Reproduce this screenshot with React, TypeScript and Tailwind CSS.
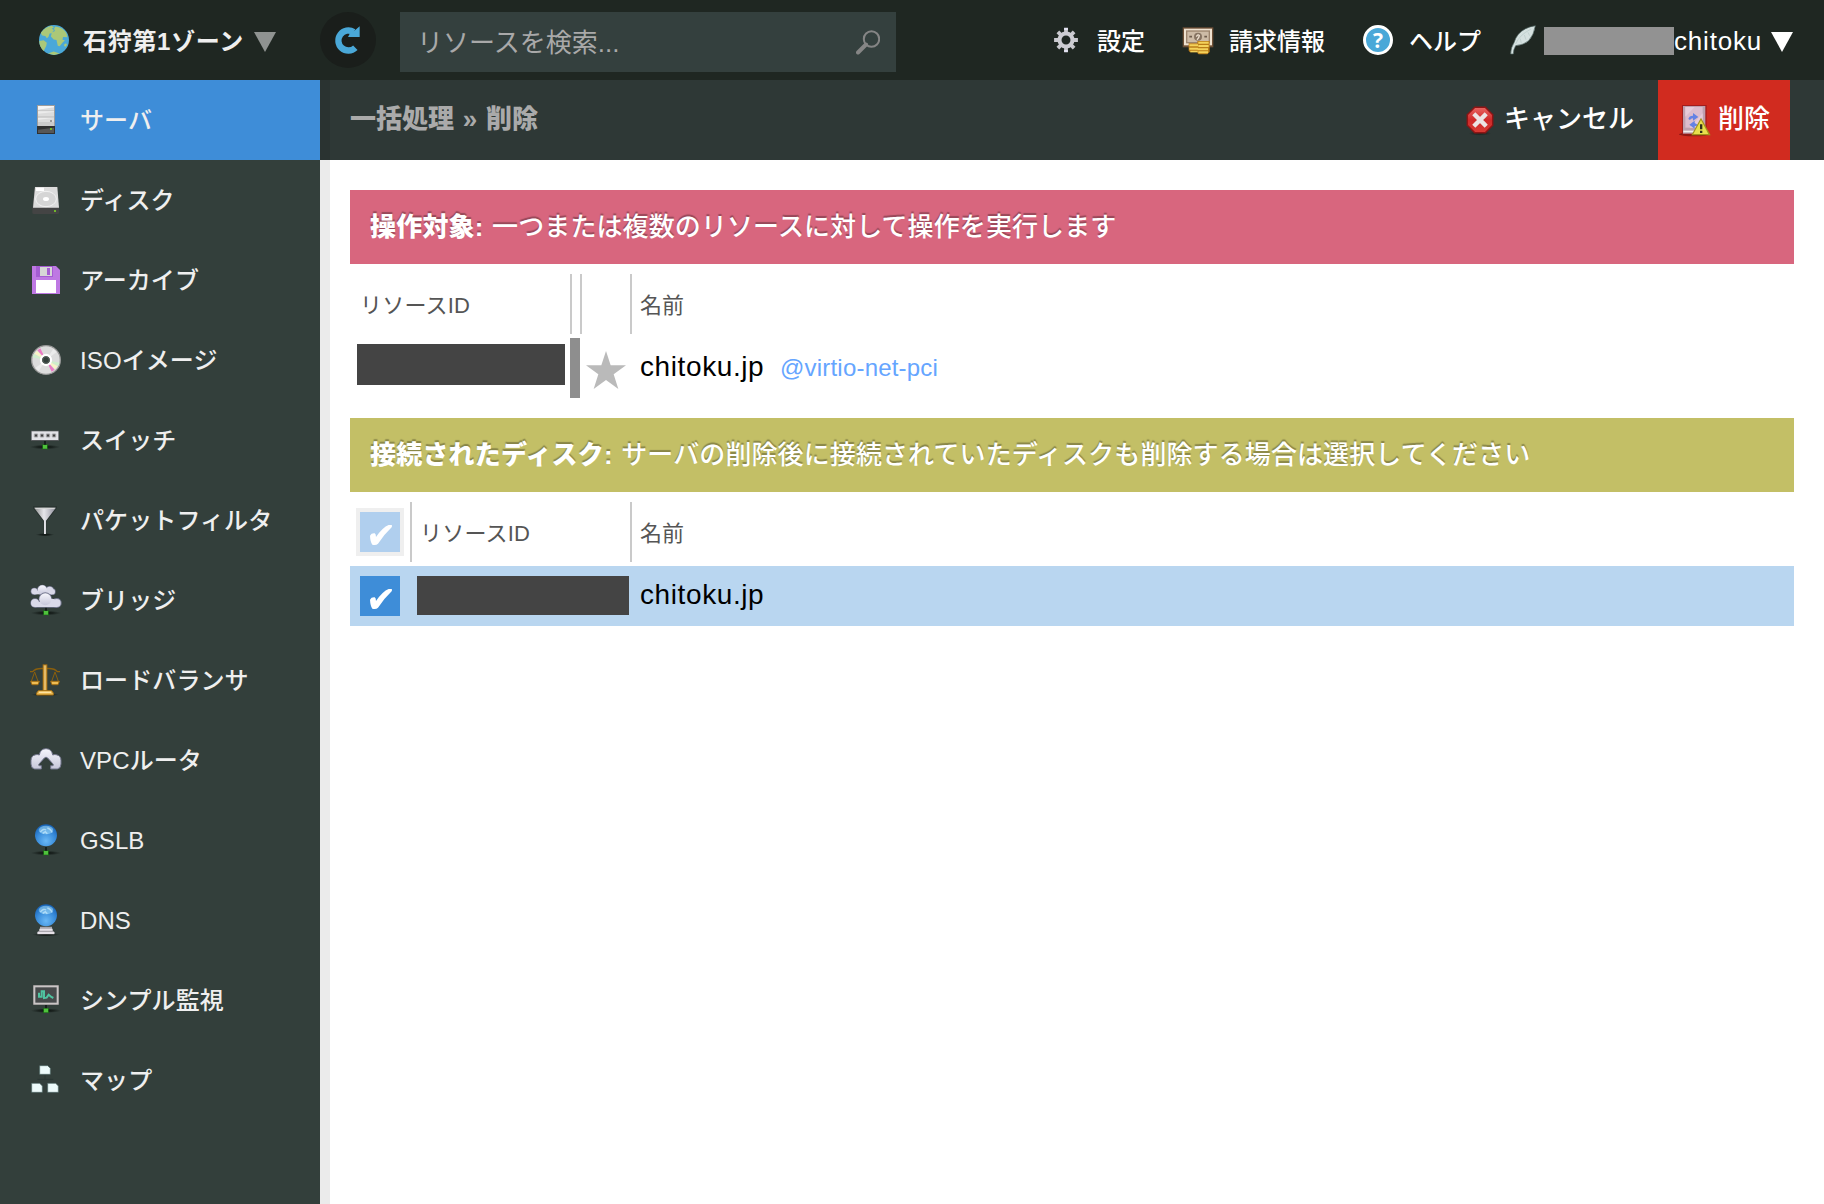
import type { ReactNode } from "react";

type IconProps = { children: ReactNode; className?: string };

function Icon({ children, className = "size-8" }: IconProps) {
  return (
    <svg viewBox="0 0 96 96" className={`block shrink-0 overflow-visible ${className}`}>
      {children}
    </svg>
  );
}

function Defs() {
  return (
    <svg className="absolute size-0">
      <defs>
        <linearGradient id="silver" x1="0" y1="0" x2="0" y2="1">
          <stop offset="0" stopColor="#f6f6fc" />
          <stop offset="1" stopColor="#c6c6da" />
        </linearGradient>
        <linearGradient id="gold" x1="0" y1="0" x2="1" y2="0">
          <stop offset="0" stopColor="#c48a28" />
          <stop offset="0.5" stopColor="#f2cf82" />
          <stop offset="1" stopColor="#c48a28" />
        </linearGradient>
        <linearGradient id="funnel" x1="0" y1="0" x2="1" y2="0">
          <stop offset="0" stopColor="#8d8d8d" />
          <stop offset="0.45" stopColor="#e6e6ea" />
          <stop offset="1" stopColor="#8f8f9b" />
        </linearGradient>
        <radialGradient id="ball" cx="0.5" cy="0.75" r="0.75">
          <stop offset="0" stopColor="#6ab8f5" />
          <stop offset="0.55" stopColor="#3a8ddb" />
          <stop offset="1" stopColor="#1560b4" />
        </radialGradient>
        <radialGradient id="shade">
          <stop offset="0" stopColor="#0c120f" />
          <stop offset="0.5" stopColor="#151c19" stopOpacity="0.8" />
          <stop offset="1" stopColor="#1b2421" stopOpacity="0" />
        </radialGradient>
        <linearGradient id="red" x1="0" y1="0" x2="0" y2="1">
          <stop offset="0" stopColor="#e8625f" />
          <stop offset="0.5" stopColor="#cf2a2a" />
          <stop offset="1" stopColor="#d83a34" />
        </linearGradient>
      </defs>
    </svg>
  );
}

function NetNode({ x = 48, y = 87 }: { x?: number; y?: number }) {
  return (
    <g>
      <ellipse cx={x} cy={y} rx="46" ry="7" fill="url(#shade)" />
      <rect x={x - 3} y={y - 18} width="6" height="12" fill="#16201b" />
      <path d={`M${x - 10} ${y - 9}l7 2h6l7-2-2 9 2 8-7-2h-6l-7 2 2-8z`} fill="#1c6a18" />
      <rect x={x - 6} y={y - 6} width="12" height="11" fill="#4fc23c" />
    </g>
  );
}

const ServerIcon = () => (
  <Icon>
    <rect x="21" y="3" width="54" height="64" fill="#9d9d9d" />
    <rect x="24" y="6" width="48" height="60" fill="#dcdcdc" />
    <path d="M24 6h48v4L24 17z" fill="#f6f6f6" />
    <path d="M24 18h48v4H24zM24 36h48v5H24zM24 54h48v12H24z" fill="#cbcbcb" />
    <path d="M24 29l48-5v-2H24zM24 47l48-5H24z" fill="#ececec" />
    <rect x="60" y="48" width="6" height="6" fill="#999" />
    <rect x="21" y="66" width="54" height="24" fill="#303030" />
    <path d="M24 77l48-6v16H24z" fill="#575757" />
    <rect x="60" y="72" width="6" height="6" fill="#6fb52c" />
  </Icon>
);

const DiskIcon = () => (
  <Icon>
    <path d="M15 8h66l6 65v13q0 4-4 4H11q-4 0-4-4V73z" fill="#444" />
    <path d="M15 9h67l5 62H9z" fill="#dcdcdc" />
    <rect x="18" y="11" width="24" height="10" fill="#fff" />
    <ellipse cx="48" cy="45" rx="31" ry="23" fill="#d5d5d5" stroke="#f2f2f2" strokeWidth="3" />
    <ellipse cx="48" cy="45" rx="9" ry="6" fill="#fff" />
    <rect x="72" y="78" width="6" height="6" fill="#6fb52c" />
  </Icon>
);

const ArchiveIcon = () => (
  <Icon>
    <path d="M6 6h72l12 12v72H6z" fill="#be78e3" />
    <rect x="18" y="6" width="51" height="33" fill="#a45cd2" />
    <rect x="30" y="9" width="36" height="27" fill="#d6d6d6" />
    <rect x="51" y="12" width="9" height="21" fill="#a45cd2" />
    <rect x="18" y="48" width="60" height="39" fill="#fff" />
  </Icon>
);

const IsoIcon = () => (
  <Icon>
    <circle cx="48" cy="48" r="43" fill="#dcdcdc" stroke="#989898" strokeWidth="4" />
    <path d="M48 48L12 30l-5 10z" fill="#cfeecb" />
    <path d="M48 48L13 29l8-9z" fill="#f7f3c6" />
    <path d="M48 48L22 19l9-6z" fill="#ea7cc4" />
    <path d="M48 48l36 18 5-10z" fill="#cfeecb" />
    <path d="M48 48l35 19-8 9z" fill="#f7f3c6" />
    <path d="M48 48l26 29-9 6z" fill="#ea7cc4" />
    <path d="M48 48l22-33 10 9zM48 48L26 81l-10-9z" fill="#ebebeb" />
    <circle cx="48" cy="48" r="15" fill="#33403b" stroke="#fff" strokeWidth="7" />
    <circle cx="48" cy="48" r="10" fill="#33403b" stroke="#5b6460" strokeWidth="3" />
  </Icon>
);

const SwitchIcon = () => (
  <Icon>
    <NetNode x={45} y={69} />
    <rect x="3" y="20" width="84" height="31" fill="#55585a" />
    <rect x="5" y="22" width="80" height="26" fill="#e2e2e6" />
    <path d="M13 30h10v9H13zM31 30h10v9H31zM49 30h10v9H49zM67 30h10v9H67z" fill="#3d3d3d" stroke="#a5a5a8" strokeWidth="3" />
  </Icon>
);

const FilterIcon = () => (
  <Icon>
    <ellipse cx="45" cy="92" rx="28" ry="5" fill="url(#shade)" />
    <path d="M9 7h72v6L49 53v38h-8V53L9 13z" fill="#2a3431" />
    <path d="M12 11h66L48 50v40h-6V50z" fill="url(#funnel)" />
    <path d="M14 11h62l-3 4H17z" fill="#d4d4d4" />
  </Icon>
);

const BridgeIcon = () => (
  <Icon>
    <NetNode />
    <g fill="#777a92">
      <circle cx="13" cy="22" r="11" />
      <circle cx="37" cy="18" r="16" />
      <circle cx="59" cy="19" r="13" />
      <circle cx="67" cy="23" r="10" />
    </g>
    <g fill="#d9d9e8">
      <circle cx="13" cy="22" r="9" />
      <circle cx="59" cy="19" r="11" />
      <circle cx="67" cy="23" r="8" />
      <rect x="13" y="20" width="54" height="11" />
    </g>
    <circle cx="37" cy="18" r="14" fill="url(#silver)" />
    <g fill="#777a92">
      <circle cx="15" cy="57" r="14" />
      <circle cx="46" cy="45" r="20" />
      <circle cx="80" cy="57" r="15" />
      <rect x="14" y="52" width="67" height="19" />
    </g>
    <g fill="#dadae9">
      <circle cx="15" cy="57" r="12" />
      <circle cx="67" cy="54" r="10" />
      <circle cx="80" cy="57" r="12" />
      <rect x="15" y="54" width="65" height="15" />
    </g>
    <circle cx="46" cy="46" r="18" fill="url(#silver)" />
  </Icon>
);

const BalanceIcon = () => (
  <Icon>
    <ellipse cx="45" cy="92" rx="42" ry="5" fill="url(#shade)" />
    <g fill="none" stroke="#8b5f0d" strokeWidth="4">
      <path d="M0 23h8q9-12 37-9 28-3 37 9h8" />
      <path d="M14 24L4 52M14 24l10 28M75 24L65 52M75 24l10 28" strokeWidth="3" />
    </g>
    <path d="M2 52h26l-4 10H6zM62 52h26l-4 10H66z" fill="#eebd55" stroke="#a36f14" strokeWidth="3" />
    <rect x="38" y="1" width="14" height="80" fill="#a36f14" />
    <rect x="40" y="4" width="10" height="76" fill="url(#gold)" />
    <path d="M25 80h40l5 7v6H20v-6z" fill="#ecbb55" stroke="#a36f14" strokeWidth="3" />
    <rect x="27" y="83" width="36" height="4" fill="#ffe3a0" />
  </Icon>
);

const VpcIcon = () => (
  <Icon>
    <path
      d="M14 75Q3 73 3 60V50q0-16 15-18 5-1 10 1 3-19 20-19t20 19q5-2 10-1 15 2 15 18v10q0 13-11 15H62V65h7q2-2 0-5L53 42q-5-5-10 0L27 60q-2 3 0 5h7v10z"
      fill="url(#silver)"
      stroke="#73768d"
      strokeWidth="3"
      strokeLinejoin="round"
    />
  </Icon>
);

const Ball = () => (
  <g>
    <circle cx="48" cy="34" r="33" fill="url(#ball)" />
    <ellipse cx="48" cy="18" rx="22" ry="13" fill="#a4def9" opacity="0.55" />
    <path d="M31 24q10-12 17-6M52 12q12 4 14 14M38 28l8-5 6 6" fill="none" stroke="#d5f2ff" strokeWidth="4" opacity="0.6" />
  </g>
);

const GslbIcon = () => (
  <Icon>
    <NetNode />
    <Ball />
  </Icon>
);

const DnsIcon = () => (
  <Icon>
    <ellipse cx="48" cy="92" rx="42" ry="5" fill="url(#shade)" />
    <path d="M30 68h36v10l7 6v7H22v-7l8-6z" fill="#aaa7ad" />
    <path d="M28 74h40v6H28zM23 84h50v6H23z" fill="#e4e0e6" />
    <Ball />
  </Icon>
);

const MonitorIcon = () => (
  <Icon>
    <NetNode y={80} />
    <rect x="9" y="3" width="78" height="60" fill="#4e4e4e" />
    <rect x="13" y="7" width="70" height="52" fill="#474a4b" stroke="#c9c5c5" strokeWidth="6" />
    <path d="M27 26v12h8V22h7v20l8-1 6-9 8 7 6 3" fill="none" stroke="#4fc3a0" strokeWidth="6" />
  </Icon>
);

const MapIcon = () => (
  <Icon>
    <path d="M45 34v12M22 46h48" fill="none" stroke="#2b3734" strokeWidth="3" />
    <g fill="#edfbfb" stroke="#4f6867" strokeWidth="2">
      <path d="M29 5h24l8 8v18H29zM5 58h24l8 8v19H5zM53 58h24l8 8v19H53z" />
    </g>
  </Icon>
);

const GlobeIcon = () => (
  <Icon className="size-[30px]">
    <circle cx="48" cy="48" r="48" fill="#4aa8d8" />
    <path d="M6 25Q18 6 40 2l8 5-7 5 7 4-8 10-6 1-4 11-5 4-4-6-12-3zM1 51l14-2 10 8-2 10-8 16Q1 70 1 51zM52 5q24 2 36 22l3 12-14-1-2 9 8 2-8 8-9 11-6-2-4-18-9-2-9-9 3-13 10-5-3-7zM79 64l7-6 4 5-6 7zM29 91l18-6 19 6-18 5z" fill="#abc878" />
  </Icon>
);

const GearIcon = () => (
  <Icon className="size-[26px]">
    <g stroke="#c9c9cf" strokeWidth="14">
      <path d="M48 4v88M4 48h88M18 18l60 60M78 18L18 78" />
    </g>
    <circle cx="48" cy="48" r="24" fill="#1f2722" stroke="#cdcdd3" strokeWidth="15" />
    <path d="M41 3h14v8H41zM41 85h14v8H41z" fill="#e3e3f2" />
  </Icon>
);

const MoneyIcon = () => (
  <Icon className="size-8">
    <rect x="2" y="10" width="92" height="60" fill="#6e5036" />
    <rect x="6" y="14" width="84" height="50" fill="#efe2d0" />
    <rect x="14" y="21" width="68" height="35" fill="#cdbba6" stroke="#9b846d" strokeWidth="4" />
    <circle cx="48" cy="38" r="12" fill="#877462" />
    <path d="M43 38q5-9 9-3-1 7-7 12" stroke="#eee0cf" strokeWidth="4" fill="none" />
    <path d="M22 38h8M67 38h8" stroke="#6f5d4d" strokeWidth="5" />
    <path d="M20 58h27v27H24l-4-5zM46 51h37v33l-7 7H50l-4-4z" fill="#ba7d19" />
    <path d="M22 61h26v6H22zM22 71h26v6H22zM25 80h22v5H25zM49 53h31v6H49zM49 63h31v6H49zM47 73h31v6H47zM49 82h29v6H49z" fill="#f4d25b" />
  </Icon>
);

const FeatherIcon = () => (
  <Icon>
    <path d="M85 5Q52 10 34 31q-9 11-13 25-10 15-10 34h8q0-13 7-25 25-2 39-15 16-17 20-45z" fill="#d5e1e0" stroke="#4b605e" strokeWidth="2" />
    <path d="M72 15Q36 34 26 60M52 33l5 14M63 25l5 10M40 44l3 14" stroke="#b7c8c7" strokeWidth="2" fill="none" />
  </Icon>
);

const CancelIcon = () => (
  <Icon className="size-7">
    <ellipse cx="48" cy="94" rx="40" ry="8" fill="url(#shade)" opacity="0.6" />
    <path d="M29 2h38l27 27v38L67 94H29L2 67V29z" fill="#8f1414" />
    <path d="M31 7h34l24 24v34L65 89H31L7 65V31z" fill="url(#red)" />
    <path d="M32 32l32 32M64 32L32 64" stroke="#ece4e4" strokeWidth="15" strokeLinecap="square" />
  </Icon>
);

const DeleteIcon = () => (
  <Icon>
    <ellipse cx="46" cy="91" rx="46" ry="6" fill="#8f1813" />
    <rect x="9" y="3" width="74" height="88" fill="#a31c1c" />
    <rect x="12" y="6" width="67" height="83" fill="#bda0ae" />
    <path d="M19 9h52v62H19z" fill="#dcbccd" />
    <path d="M19 9h28L19 38zM71 28v28L48 71H32z" fill="#e6cbd9" />
    <path d="M13 80h50v5H13z" fill="#f3eeee" />
    <path d="M28 45q2-10 14-10v-8l16 12-16 11v-7q-7 0-9 5zM56 62q-3 5-9 5v7L31 62l16-12v7z" fill="#6482e4" />
    <path d="M66 41l29 53H37z" fill="#a3941b" />
    <path d="M66 48l22 42H43z" fill="#e8df4e" />
    <path d="M63 61h7v15h-7zM63 80h7v7h-7z" fill="#30301d" />
  </Icon>
);

const RefreshIcon = () => (
  <Icon className="size-8">
    <path d="M70 71A30 30 0 1 1 65 24" fill="none" stroke="#4aa8d8" strokeWidth="19" />
    <path d="M83 7v32H48l5-10 16-10z" fill="#4aa8d8" />
  </Icon>
);

const Triangle = ({ className }: { className: string }) => (
  <svg viewBox="0 0 22 20" className={`block h-5 w-[22px] shrink-0 ${className}`}>
    <path d="M0 0h22L11 20z" fill="currentColor" />
  </svg>
);

const Check = () => (
  <svg viewBox="0 0 66 60" className="relative left-px top-[3px] h-5 w-[22px]">
    <path d="M0 32q4-8 14-7 4 2 4 11Q38 7 56 0h9q2 3 0 7Q42 29 24 56q-6 6-17 3Q1 51 0 32z" fill="#fff" />
  </svg>
);

const menu = [
  { label: "サーバ", icon: <ServerIcon /> },
  { label: "ディスク", icon: <DiskIcon /> },
  { label: "アーカイブ", icon: <ArchiveIcon /> },
  { label: "ISOイメージ", icon: <IsoIcon /> },
  { label: "スイッチ", icon: <SwitchIcon /> },
  { label: "パケットフィルタ", icon: <FilterIcon /> },
  { label: "ブリッジ", icon: <BridgeIcon /> },
  { label: "ロードバランサ", icon: <BalanceIcon /> },
  { label: "VPCルータ", icon: <VpcIcon /> },
  { label: "GSLB", icon: <GslbIcon /> },
  { label: "DNS", icon: <DnsIcon /> },
  { label: "シンプル監視", icon: <MonitorIcon /> },
  { label: "マップ", icon: <MapIcon /> },
];

function Banner({ title, text, className }: { title: string; text: string; className: string }) {
  return (
    <div className={`flex h-[74px] items-center whitespace-pre pl-5 text-[26px] leading-none text-white [text-shadow:0_-2px_1px_rgba(0,0,0,0.3)] ${className}`}>
      <b className="font-black tracking-[0.2px]">{title}</b>
      <span className="ml-px font-medium tracking-[0.1px]">{text}</span>
    </div>
  );
}

export default function App() {
  return (
    <div className="flex h-[1204px] w-[1824px] flex-col overflow-hidden bg-white font-['Liberation_Sans','Noto_Sans_CJK_JP',sans-serif]">
      <Defs />
      <header className="flex h-20 shrink-0 items-center whitespace-nowrap bg-[#1f2722] text-2xl font-medium text-white">
        <div className="flex w-80 shrink-0 items-center pl-[39px]">
          <GlobeIcon />
          <span className="ml-[14px] w-[162px] pt-1 font-bold tracking-[0.7px] text-[#efefef]">石狩第1ゾーン</span>
          <Triangle className="ml-[9px] mt-1 text-[#8f9391]" />
        </div>
        <div className="flex size-14 shrink-0 items-center justify-center rounded-full bg-[#1a1e1b]">
          <RefreshIcon />
        </div>
        <div className="ml-6 mt-1 flex h-[60px] w-[496px] shrink-0 items-center justify-between bg-[#34403e] pl-[17px] pr-4 text-[26px] font-normal text-[#a9a9a9]">
          <span className="pt-0.5">リソースを検索...</span>
          <svg viewBox="0 0 24 25" className="h-[25px] w-6" fill="none" stroke="#858585">
            <circle cx="15.500" cy="9" r="7.700" strokeWidth="2" />
            <path d="M10 14.500L2 22.500" strokeWidth="4" strokeLinecap="round" />
          </svg>
        </div>
        <div className="ml-[157px] flex shrink-0 items-center">
          <GearIcon />
          <span className="ml-[18px] w-12 pt-1">設定</span>
        </div>
        <div className="ml-[37px] flex shrink-0 items-center">
          <MoneyIcon />
          <span className="ml-[15px] w-24 pt-1">請求情報</span>
        </div>
        <div className="ml-[38px] flex shrink-0 items-center">
          <span className="flex size-[30px] items-center justify-center rounded-full border-[3px] border-white bg-[#4aa8d8] font-['Open_Sans'] text-[21px] font-bold leading-none">?</span>
          <span className="ml-4 w-[72px] pt-1">ヘルプ</span>
        </div>
        <div className="ml-[26px] flex shrink-0 items-center">
          <FeatherIcon />
          <span className="ml-[5px] mt-0.5 h-7 w-[130px] bg-[#929292]" />
          <span className="w-[97px] pt-0.5 text-[26px] font-normal tracking-[0.8px]">chitoku</span>
          <Triangle className="mt-1" />
        </div>
      </header>

      <div className="flex min-h-0 flex-1">
        <nav className="w-80 shrink-0 bg-[#333f3b]">
          {menu.map((m, i) => (
            <a key={m.label} className={`flex h-20 items-center pl-[30px] text-2xl font-medium text-[#efefef] ${i === 0 ? "bg-[#3e8dd8]" : ""}`}>
              {m.icon}
              <span className="ml-[18px] whitespace-nowrap pt-0.5 tracking-[0.1px]">{m.label}</span>
            </a>
          ))}
        </nav>

        <div className="flex min-w-0 flex-1 flex-col">
          <div className="flex h-20 shrink-0 items-center border-l-[10px] border-[#2a3331] bg-[#2e3836] pl-5 text-[26px] text-white">
            <span className="whitespace-nowrap pb-0.5 font-black text-[#aaa] [word-spacing:1.500px]">一括処理 » 削除</span>
            <div className="ml-auto flex items-center">
              <CancelIcon />
              <span className="ml-2.5 w-[131px] whitespace-nowrap pb-0.5 font-medium">キャンセル</span>
            </div>
            <div className="ml-[23px] mr-[34px] flex h-20 w-[132px] items-center bg-[#d12b1f] pl-[21px]">
              <DeleteIcon />
              <span className="ml-[7px] whitespace-nowrap pb-0.5 font-medium">削除</span>
            </div>
          </div>

          <main className="min-h-0 flex-1 border-l-[10px] border-[#ebebeb] bg-white pl-5 pr-[30px] pt-[30px] text-[22px] text-[#555]">
            <Banner title="操作対象: " text="一つまたは複数のリソースに対して操作を実行します" className="bg-[#d8667e]" />
            <div className="mt-2.5 flex h-[60px] items-center">
              <div className="h-full w-[220px] pl-2.5 leading-[64px] tracking-[0.2px]">リソースID</div>
              <div className="h-full w-2.5 border-l-2 border-[#cacaca]" />
              <div className="h-full w-[50px] border-l-2 border-[#cacaca]" />
              <div className="h-full border-l-2 border-[#cacaca] pl-2 leading-[64px]">名前</div>
            </div>
            <div className="mt-1 flex h-[60px]">
              <div className="w-[220px] pl-[7px] pt-1.5">
                <div className="h-[41px] w-[208px] bg-[#444]" />
              </div>
              <div className="w-2.5 bg-[#8e8e8e]" />
              <div className="w-[50px] pl-1.5 pt-[13px]">
                <svg viewBox="0 0 120 114" className="block h-[38px] w-10">
                  <path d="M60 0l14 43h46L83 70l14 44-37-27-37 27 14-44L0 43h46z" fill="#bababa" />
                </svg>
              </div>
              <span className="w-[150px] pl-2.5 text-[28px] leading-[58px] tracking-[0.6px] text-black">chitoku.jp</span>
              <span className="text-2xl leading-[60px] tracking-[0.2px] text-[#65a5ff]">@virtio-net-pci</span>
            </div>

            <Banner title="接続されたディスク: " text="サーバの削除後に接続されていたディスクも削除する場合は選択してください" className="mt-5 bg-[#c3bf66]" />
            <div className="mt-2.5 flex h-[60px]">
              <div className="w-[60px] pl-1.5 pt-1.5">
                <div className="flex size-12 items-center justify-center border-4 border-[#efefef] bg-[#b0cfee]">
                  <Check />
                </div>
              </div>
              <div className="w-[220px] border-l-2 border-[#cacaca] pl-2 leading-[64px] tracking-[0.2px]">リソースID</div>
              <div className="border-l-2 border-[#cacaca] pl-2 leading-[64px]">名前</div>
            </div>
            <div className="mt-1 flex h-[60px] bg-[#b9d6f0]">
              <div className="w-[67px] pl-2.5 pt-2.5">
                <div className="flex size-10 items-center justify-center bg-[#3e8dd8]">
                  <Check />
                </div>
              </div>
              <div className="mt-2.5 h-[39px] w-[212px] bg-[#444]" />
              <span className="pl-[11px] text-[28px] leading-[58px] tracking-[0.6px] text-black">chitoku.jp</span>
            </div>
          </main>
        </div>
      </div>
    </div>
  );
}
